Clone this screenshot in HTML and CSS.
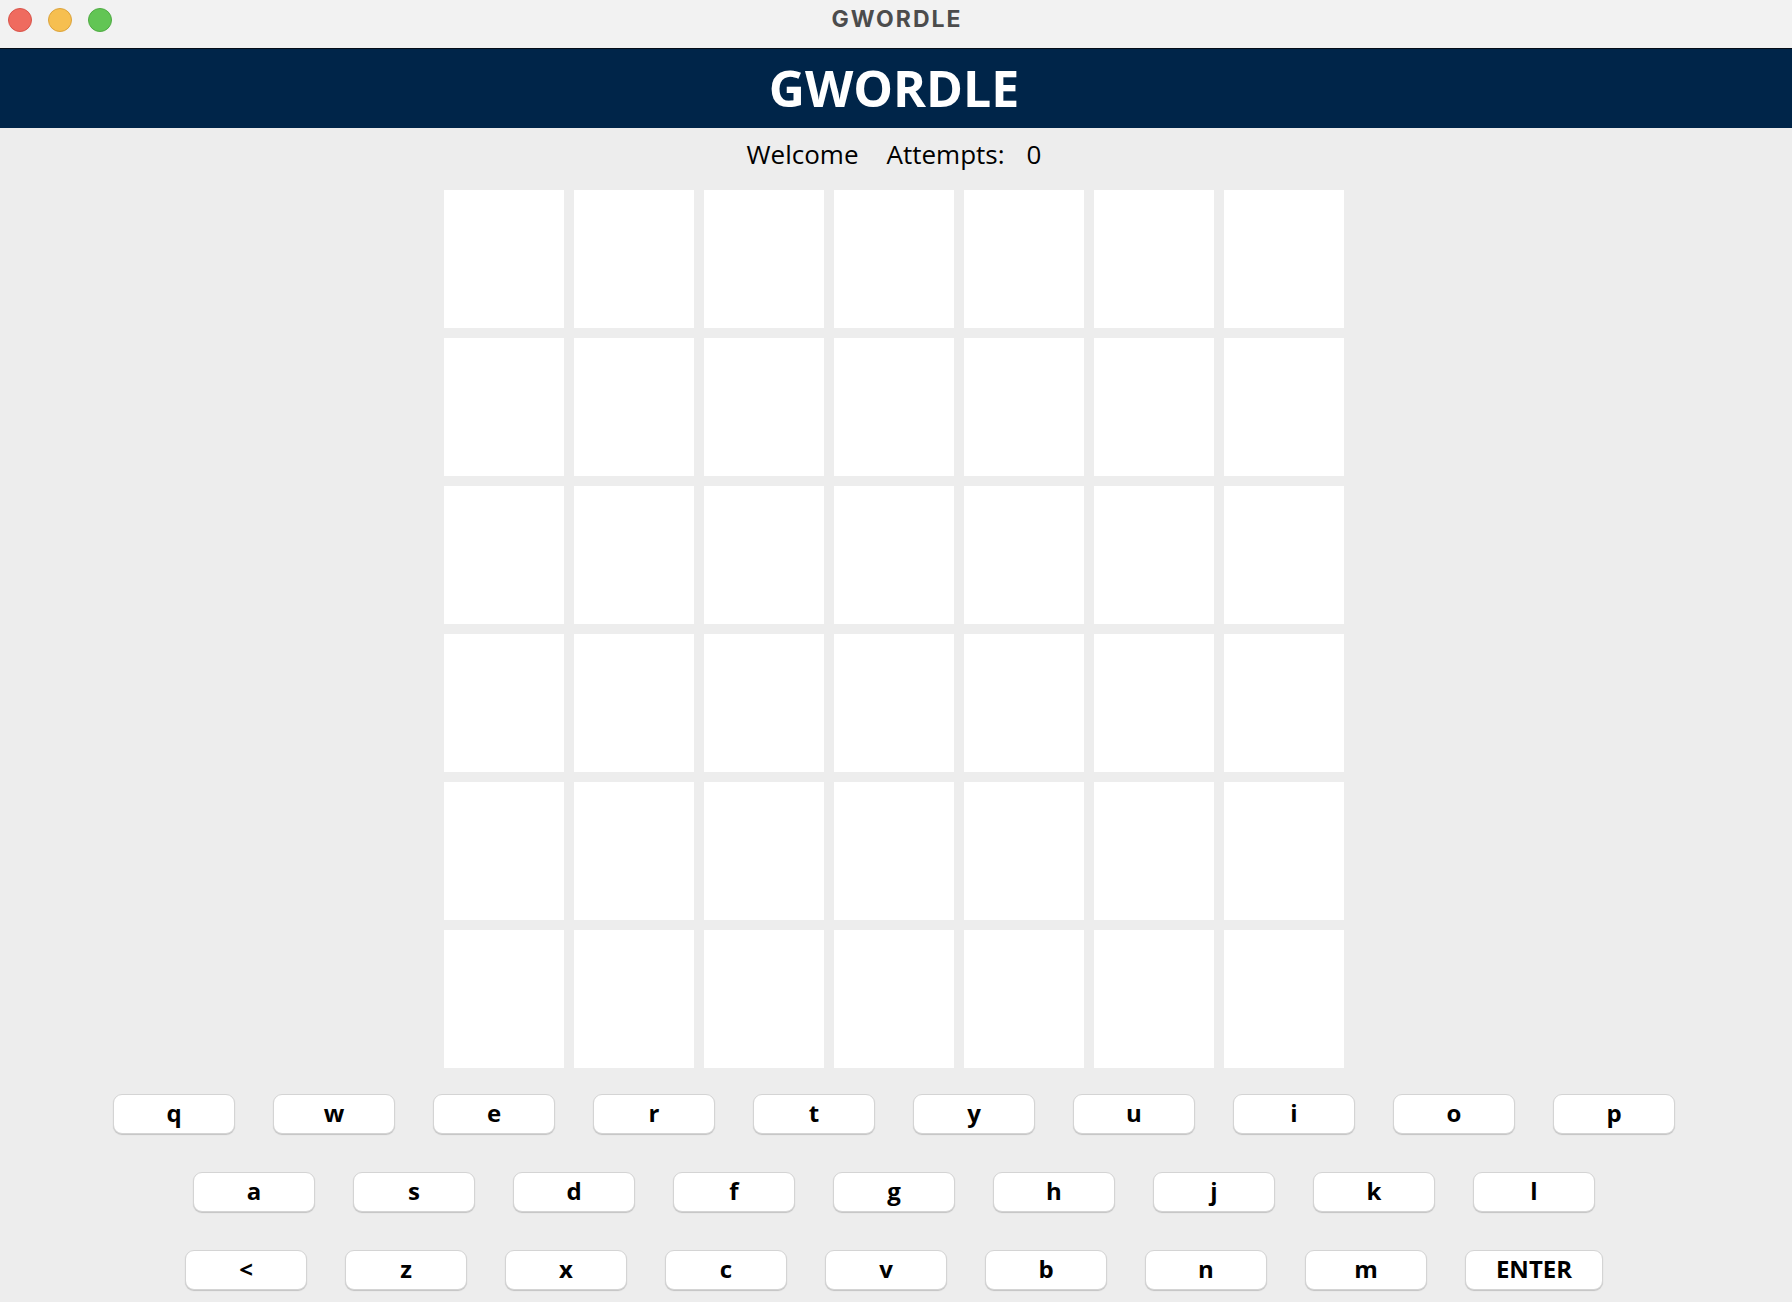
FILE: index.html
```html
<!DOCTYPE html>
<html lang="en">
<head>
<meta charset="utf-8">
<title>GWORDLE</title>
<link rel="stylesheet" href="styles.css">
</head>
<body>
<div class="window">
  <div class="titlebar">
    <div class="lights">
      <span class="light red"></span>
      <span class="light yellow"></span>
      <span class="light green"></span>
    </div>
    <div class="wintitle">GWORDLE</div>
    <div class="spacer"></div>
  </div>
  <div class="app">
    <header class="banner">GWORDLE</header>
    <div class="status">
      <span class="welcome">Welcome</span>
      <span class="attempts">Attempts:</span>
      <span class="count">0</span>
    </div>
    <div class="board">
      <div class="cell"></div><div class="cell"></div><div class="cell"></div><div class="cell"></div><div class="cell"></div><div class="cell"></div><div class="cell"></div>
      <div class="cell"></div><div class="cell"></div><div class="cell"></div><div class="cell"></div><div class="cell"></div><div class="cell"></div><div class="cell"></div>
      <div class="cell"></div><div class="cell"></div><div class="cell"></div><div class="cell"></div><div class="cell"></div><div class="cell"></div><div class="cell"></div>
      <div class="cell"></div><div class="cell"></div><div class="cell"></div><div class="cell"></div><div class="cell"></div><div class="cell"></div><div class="cell"></div>
      <div class="cell"></div><div class="cell"></div><div class="cell"></div><div class="cell"></div><div class="cell"></div><div class="cell"></div><div class="cell"></div>
      <div class="cell"></div><div class="cell"></div><div class="cell"></div><div class="cell"></div><div class="cell"></div><div class="cell"></div><div class="cell"></div>
    </div>
    <div class="keyboard">
      <div class="krow">
        <button class="key">q</button><button class="key">w</button><button class="key">e</button><button class="key">r</button><button class="key">t</button><button class="key">y</button><button class="key">u</button><button class="key">i</button><button class="key">o</button><button class="key">p</button>
      </div>
      <div class="krow">
        <button class="key">a</button><button class="key">s</button><button class="key">d</button><button class="key">f</button><button class="key">g</button><button class="key">h</button><button class="key">j</button><button class="key">k</button><button class="key">l</button>
      </div>
      <div class="krow">
        <button class="key">&lt;</button><button class="key">z</button><button class="key">x</button><button class="key">c</button><button class="key">v</button><button class="key">b</button><button class="key">n</button><button class="key">m</button><button class="key enter">ENTER</button>
      </div>
    </div>
  </div>
</div>
</body>
</html>
```

FILE: styles.css
```css
html, body {
  margin: 0;
  padding: 0;
  background: #ededed;
}

.window {
  width: 1792px;
  height: 1302px;
  overflow: hidden;
  background: #ededed;
  font-family: "Open Sans", "Liberation Sans", sans-serif;
}

.titlebar {
  height: 48px;
  background: #f2f2f2;
  display: grid;
  grid-template-columns: 1fr auto 1fr;
  align-items: start;
}

.lights {
  display: flex;
  gap: 16px;
  padding: 8px 0 0 8px;
}

.light {
  width: 22px;
  height: 22px;
  border-radius: 50%;
  border: 1px solid transparent;
}

.red { background: #ef6b5f; border-color: #d9544a; }
.yellow { background: #f6bf50; border-color: #dca33c; }
.green { background: #62c554; border-color: #4fab43; }

.wintitle {
  font-family: Inter, "Noto Sans", sans-serif;
  font-weight: 700;
  font-size: 23px;
  line-height: 39px;
  letter-spacing: 2px;
  color: #4c4c4c;
  padding-left: 2px;
}

.app {
  padding-right: 4px;
  display: flex;
  flex-direction: column;
  align-items: center;
}

.banner {
  align-self: stretch;
  box-sizing: border-box;
  height: 80px;
  border-top: 1px solid #050d18;
  background: #002549;
  color: #ffffff;
  font-weight: 700;
  font-size: 50px;
  line-height: 79px;
  text-align: center;
  margin-right: -4px;
  padding-right: 4px;
}

.status {
  padding-top: 8px;
  font-size: 26px;
  line-height: 36px;
  color: #000;
  display: flex;
}

.attempts { margin-left: 28px; }
.count { margin-left: 22px; }

.board {
  margin-top: 18px;
  display: grid;
  grid-template-columns: repeat(7, 120px);
  grid-auto-rows: 138px;
  gap: 10px;
}

.cell {
  background: #ffffff;
}

.keyboard {
  margin-top: 26px;
  display: flex;
  flex-direction: column;
  align-items: center;
  gap: 38px;
}

.krow {
  display: flex;
  gap: 38px;
}

.key {
  box-sizing: border-box;
  width: 122px;
  height: 40px;
  margin: 0;
  padding: 0 0 3px 0;
  background: #ffffff;
  border: 1px solid #d4d4d4;
  border-radius: 9px;
  box-shadow: 0 1px 1px rgba(0, 0, 0, 0.18);
  font-family: "Open Sans", "Liberation Sans", sans-serif;
  font-weight: 700;
  font-size: 24px;
  line-height: 35px;
  color: #000;
}

.key.enter {
  width: 138px;
}
```
